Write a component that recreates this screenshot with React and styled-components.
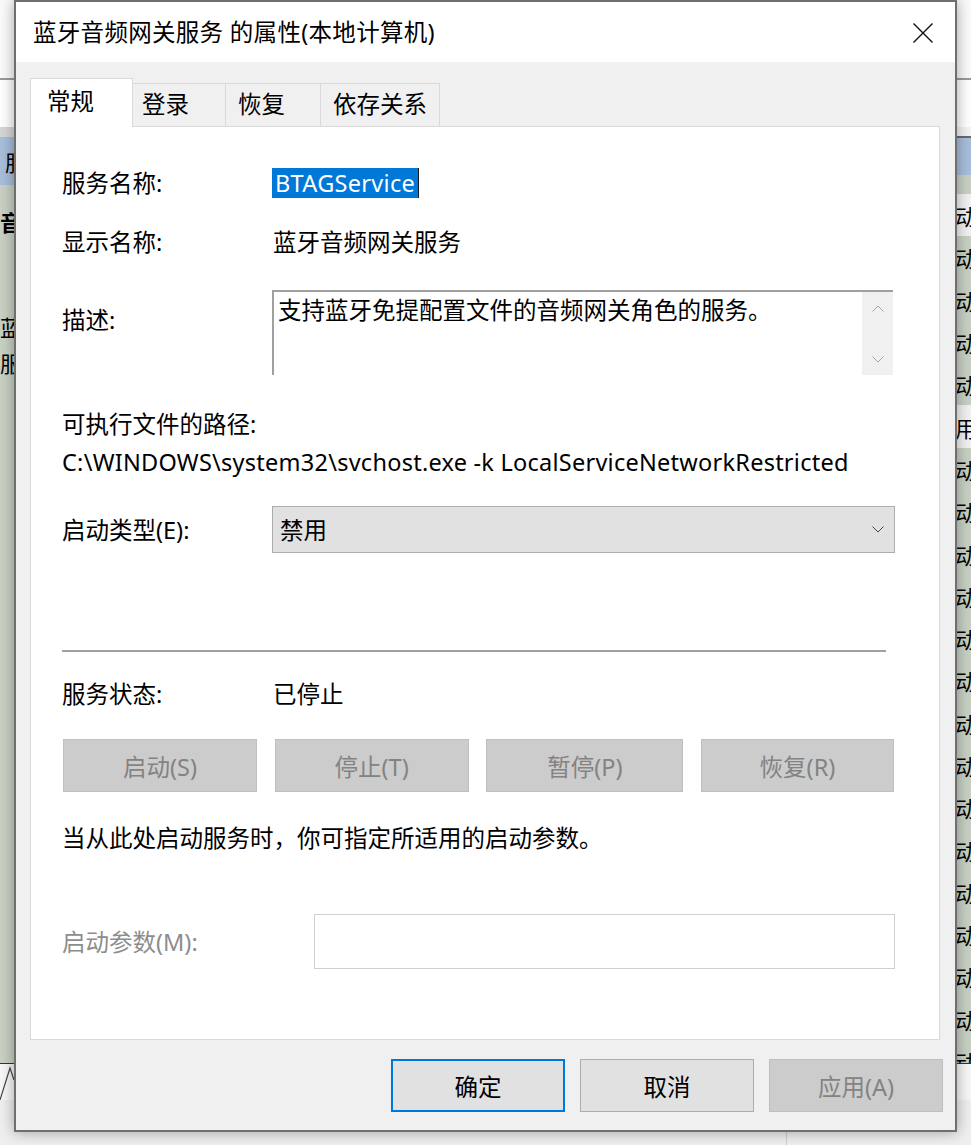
import React from 'react';
import styled, { createGlobalStyle } from 'styled-components';

const FONT = `"Noto Sans", "Noto Sans CJK SC", sans-serif`;

const Global = createGlobalStyle`
  html, body { margin: 0; padding: 0; }
  body {
    width: 971px; height: 1145px; overflow: hidden;
    background: #f0f0f0;
    font-family: ${FONT};
  }
  * { box-sizing: border-box; }
`;

/* ---------- background (services console) ---------- */
const Desktop = styled.div`
  position: relative;
  width: 971px;
  height: 1145px;
  overflow: hidden;
  background: #f0f0f0;
`;

const BgWindow = styled.div`
  width: 990px;
  height: 1145px;
  display: flex;
  flex-direction: column;
  font-family: ${FONT};
  font-size: 22px;
  color: #000;
`;

const BgToolbar = styled.div`
  height: 80px;
  background: #fbfbfb;
  border-bottom: 2px solid #9a9a9a;
`;

const BgAddress = styled.div`
  height: 47px;
  background: #fff;
`;

const BgBody = styled.div`
  height: 936px;
  display: grid;
  grid-template-columns: 500px 1fr;
  overflow: hidden;
`;

const LeftPane = styled.div`
  display: flex;
  flex-direction: column;
  background: #c8d1c4;
`;

const LeftBand = styled.div`
  height: 10px;
  background: #d6d6d6;
`;

const LeftHeader = styled.div`
  height: 48px;
  background: #a8bedb;
  display: flex;
  align-items: center;
  padding-left: 5px;
`;

const LeftTitle = styled.div`
  font-weight: 700;
  margin-top: 22px;
  line-height: 30px;
`;

const LeftText = styled.div`
  margin-top: ${p => p.$mt || 0}px;
  line-height: 36px;
`;

const RightPane = styled.div`
  display: flex;
  flex-direction: column;
  background: #c8d1c4;
`;

const RightTop = styled.div`
  height: 11px;
  background: #f4f4f4;
  border-bottom: 2px solid #6a6a6a;
`;

const RightHeader = styled.div`
  height: 37px;
  background: #a8bedb;
`;

const RightGap = styled.div`
  height: 19px;
`;

const ListRow = styled.div`
  height: 42.3px;
  flex: none;
  display: flex;
  align-items: center;
  justify-content: flex-end;
  padding-right: 13px;
  background: ${p => (p.$hi ? '#f2f2f2' : 'transparent')};
`;

const BgTabs = styled.div`
  height: 37px;
  background: #f7f7f7;
  border-top: 1px solid #333;
  display: flex;
  align-items: flex-end;
`;

const BgStatus = styled.div`
  flex: 1;
  background: #efefef;
  display: flex;
`;

const StatusCell = styled.div`
  width: ${p => p.$w}px;
  border-right: 1px solid #d0d0d0;
`;

/* ---------- dialog ---------- */
const Dialog = styled.div`
  position: absolute;
  left: 14px;
  top: 0;
  width: 943px;
  height: 1132px;
  border: 2px solid #6f6f6f;
  background: #f0f0f0;
  box-shadow: 0 0 14px rgba(0, 0, 0, 0.35);
  display: flex;
  flex-direction: column;
  font-family: ${FONT};
  font-size: 23.5px;
  color: #000;
`;

const TitleBar = styled.div`
  height: 60px;
  flex: none;
  background: #fff;
  display: flex;
  align-items: center;
  justify-content: space-between;
  padding: 0 22px 0 17px;
`;

const TitleText = styled.div`
  line-height: 30px;
  letter-spacing: 0.3px;
`;

const CloseBtn = styled.div`
  width: 20px;
  height: 20px;
  display: flex;
  margin-top: 2px;
`;

const Body = styled.div`
  flex: 1;
  display: flex;
  flex-direction: column;
  padding: 16px 15px 0 14px;
`;

const TabStrip = styled.div`
  display: flex;
  align-items: flex-end;
  height: 49px;
  margin-bottom: -1px;
  position: relative;
  z-index: 1;
`;

const Tab = styled.div`
  width: ${p => p.$w}px;
  height: ${p => (p.$active ? 49 : 44)}px;
  padding-left: ${p => p.$pad}px;
  padding-top: ${p => (p.$active ? 7 : 5)}px;
  line-height: 30px;
  background: ${p => (p.$active ? '#fff' : '#f0f0f0')};
  border: 1px solid #d9d9d9;
  border-bottom: ${p => (p.$active ? 'none' : '1px solid #d9d9d9')};
  border-left-width: ${p => (p.$first ? 1 : 0)}px;
`;

const Panel = styled.div`
  height: 914px;
  background: #fff;
  border: 1px solid #d9d9d9;
  padding: 41px 44px 0 31px;
  display: flex;
  flex-direction: column;
`;

const FieldRow = styled.div`
  display: flex;
  align-items: ${p => p.$align || 'center'};
  height: ${p => p.$h || 30}px;
  margin-top: ${p => p.$mt || 0}px;
  flex: none;
`;

const Label = styled.div`
  width: ${p => p.$w || 211}px;
  flex: none;
  line-height: 30px;
  padding-top: ${p => p.$pt || 0}px;
  color: ${p => (p.$disabled ? '#8d8d8d' : '#000')};
`;

const Value = styled.div`
  line-height: 30px;
  white-space: nowrap;
  letter-spacing: ${p => p.$ls || 0}px;
`;

const Selected = styled.span`
  display: inline-block;
  height: 30px;
  line-height: 30px;
  margin-left: -1px;
  padding: 0 3px 0 3px;
  background: #0078d7;
  color: #fff;
  letter-spacing: 0.3px;
  border-right: 1px solid #1a1a1a;
`;

const TextBox = styled.div`
  margin-left: -1px;
  width: 621px;
  height: 85px;
  border-top: 2px solid #a0a0a0;
  border-left: 2px solid #a0a0a0;
  display: flex;
  justify-content: space-between;
`;

const TextBoxText = styled.div`
  padding: 3px 0 0 4px;
  line-height: 30px;
`;

const ScrollBar = styled.div`
  width: 31px;
  background: #f0f0f0;
  display: flex;
  flex-direction: column;
  align-items: center;
  justify-content: space-between;
  padding: 13px 0 12px;
`;

const Select = styled.div`
  margin-left: -1px;
  width: 623px;
  height: 47px;
  background: #e1e1e1;
  border: 1px solid #adadad;
  display: flex;
  align-items: center;
  justify-content: space-between;
  padding: 0 10px 0 7px;
`;

const Separator = styled.div`
  width: 824px;
  height: 2px;
  background: #a0a0a0;
  margin-top: 97px;
  flex: none;
`;

const ButtonRow = styled.div`
  display: flex;
  justify-content: space-between;
  width: 831px;
  margin: 30px 0 0 1px;
  flex: none;
`;

const Button = styled.div`
  width: ${p => p.$w || 194}px;
  height: 53px;
  display: flex;
  align-items: center;
  justify-content: center;
  background: ${p => (p.$disabled ? '#cccccc' : '#e1e1e1')};
  border: ${p =>
    p.$default ? '2px solid #0078d7' : p.$disabled ? '1px solid #bfbfbf' : '1px solid #adadad'};
  color: ${p => (p.$disabled ? '#838383' : '#000')};
  flex: none;
`;

const Input = styled.div`
  width: 581px;
  height: 55px;
  background: #fff;
  border: 1px solid #cfcfcf;
`;

const Footer = styled.div`
  flex: 1;
  display: flex;
  justify-content: flex-end;
  gap: 15px;
  padding: 19px 0 0;
  margin-right: -3px;
`;

const Chevron = ({ up, color = '#333', w = 12 }) => (
  <svg width={w} height={7} viewBox="0 0 12 7">
    <path
      d={up ? 'M0.5 6.5 L6 1 L11.5 6.5' : 'M0.5 0.5 L6 6 L11.5 0.5'}
      fill="none"
      stroke={color}
      strokeWidth="1"
    />
  </svg>
);

const rows = Array.from({ length: 21 }, (_, i) => i);

export default function App() {
  const tabs = [
    { label: '常规', w: 103, pad: 16, active: true },
    { label: '登录', w: 93, pad: 9 },
    { label: '恢复', w: 95, pad: 12 },
    { label: '依存关系', w: 119, pad: 12 },
  ];
  return (
    <Desktop>
      <Global />
      <BgWindow>
        <BgToolbar />
        <BgAddress />
        <BgBody>
          <LeftPane>
            <LeftBand />
            <LeftHeader>服</LeftHeader>
            <LeftTitle>音</LeftTitle>
            <LeftText $mt={72}>蓝</LeftText>
            <LeftText>服</LeftText>
          </LeftPane>
          <RightPane>
            <RightTop />
            <RightHeader />
            <RightGap />
            {rows.map(i => (
              <ListRow key={i} $hi={i === 0 || i === 5}>
                {i === 5 ? '禁用' : '自动'}
              </ListRow>
            ))}
          </RightPane>
        </BgBody>
        <BgTabs>
          <svg width="20" height="34" viewBox="0 0 20 34">
            <path d="M0 34 L10 2 L14 14" fill="none" stroke="#444" strokeWidth="1.2" />
          </svg>
        </BgTabs>
        <BgStatus>
          <StatusCell $w={787} />
        </BgStatus>
      </BgWindow>

      <Dialog>
        <TitleBar>
          <TitleText>蓝牙音频网关服务 的属性(本地计算机)</TitleText>
          <CloseBtn>
            <svg width="20" height="20" viewBox="0 0 20 20">
              <path d="M0.5 0.5 L19.5 19.5 M19.5 0.5 L0.5 19.5" stroke="#111" strokeWidth="1.4" />
            </svg>
          </CloseBtn>
        </TitleBar>
        <Body>
          <TabStrip>
            {tabs.map((t, i) => (
              <Tab key={t.label} $w={t.w} $pad={t.pad} $active={t.active} $first={i === 0}>
                {t.label}
              </Tab>
            ))}
          </TabStrip>
          <Panel>
            <FieldRow>
              <Label>服务名称:</Label>
              <Value>
                <Selected>BTAGService</Selected>
              </Value>
            </FieldRow>
            <FieldRow $mt={29}>
              <Label>显示名称:</Label>
              <Value>蓝牙音频网关服务</Value>
            </FieldRow>
            <FieldRow $mt={33} $h={85} $align="flex-start">
              <Label $pt={15}>描述:</Label>
              <TextBox>
                <TextBoxText>支持蓝牙免提配置文件的音频网关角色的服务。</TextBoxText>
                <ScrollBar>
                  <Chevron up color="#a6a6a6" />
                  <Chevron color="#a6a6a6" />
                </ScrollBar>
              </TextBox>
            </FieldRow>
            <FieldRow $mt={34}>
              <Label $w={600}>可执行文件的路径:</Label>
            </FieldRow>
            <FieldRow $mt={8}>
              <Value $ls={0.25}>C:\WINDOWS\system32\svchost.exe -k LocalServiceNetworkRestricted</Value>
            </FieldRow>
            <FieldRow $mt={29} $h={47}>
              <Label>启动类型(E):</Label>
              <Select>
                <Value>禁用</Value>
                <Chevron color="#444" />
              </Select>
            </FieldRow>
            <Separator />
            <FieldRow $mt={27}>
              <Label>服务状态:</Label>
              <Value>已停止</Value>
            </FieldRow>
            <ButtonRow>
              <Button $disabled $w={194}>启动(S)</Button>
              <Button $disabled $w={194}>停止(T)</Button>
              <Button $disabled $w={197}>暂停(P)</Button>
              <Button $disabled $w={193}>恢复(R)</Button>
            </ButtonRow>
            <FieldRow $mt={31}>
              <Value>当从此处启动服务时，你可指定所适用的启动参数。</Value>
            </FieldRow>
            <FieldRow $mt={61} $h={55}>
              <Label $w={252} $disabled>启动参数(M):</Label>
              <Input />
            </FieldRow>
          </Panel>
          <Footer>
            <Button $w={174} $default>确定</Button>
            <Button $w={174}>取消</Button>
            <Button $w={174} $disabled>应用(A)</Button>
          </Footer>
        </Body>
      </Dialog>
    </Desktop>
  );
}
